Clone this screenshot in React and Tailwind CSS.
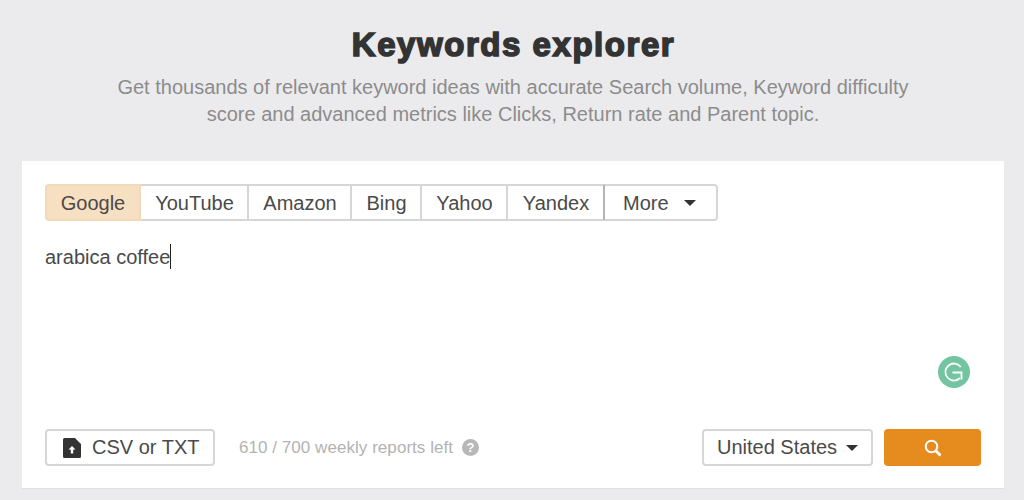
const engines = [
  { name: "Google", width: "w-[96px]", active: true },
  { name: "YouTube", width: "w-[108px]" },
  { name: "Amazon", width: "w-[103px]" },
  { name: "Bing", width: "w-[70px]" },
  { name: "Yahoo", width: "w-[86px]" },
  { name: "Yandex", width: "w-[97px]", dark: true },
];

function Caret() {
  return <span className="block w-0 h-0 border-l-[6px] border-r-[6px] border-t-[6px] border-l-transparent border-r-transparent border-t-[#333]" />;
}

export default function App() {
  return (
    <div className="w-[1024px] h-[500px] overflow-hidden bg-[#ebebed] font-['Liberation_Sans',Arial,sans-serif] flex flex-col items-center">
      <h1 className="mt-[24px] ml-[3px] h-[42px] text-[33px] leading-[42px] font-bold text-[#333] [-webkit-text-stroke:1.6px_#333] tracking-[1.55px]">
        Keywords explorer
      </h1>
      <p className="mt-[8px] ml-[2px] h-[58px] text-center text-[20px] leading-[27px] text-[#8c8c8c]">
        Get thousands of relevant keyword ideas with accurate Search volume, Keyword difficulty
        <br />
        score and advanced metrics like Clicks, Return rate and Parent topic.
      </p>

      <div className="mt-[29px] ml-[2px] w-[982px] h-[328px] bg-white border-b border-[#e0e0e0] px-[23px] pt-[23px] pb-[22px] flex flex-col">
        <div className="flex h-[37px] w-[673px] text-[20px] text-[#4a4a4a]">
          {engines.map((e) => (
            <div
              key={e.name}
              className={
                e.active
                  ? `${e.width} flex items-center justify-center bg-[#f7e0c1] border-2 border-[#f2d9b8] rounded-l-[4px]`
                  : `${e.width} flex items-center justify-center pl-[1px] border-y-2 border-r-2 border-[#d6d6d6] ${e.dark ? "border-r-[#b5b5b5]" : ""}`
              }
            >
              {e.name}
            </div>
          ))}
          <div className="w-[113px] flex items-center gap-[15px] pl-[18px] border-y-2 border-r-2 border-[#d6d6d6] rounded-r-[4px]">
            More
            <Caret />
          </div>
        </div>

        <div className="mt-[21px] h-[29px] flex items-center text-[20px] text-[#4a4a4a]">
          arabica coffee
          <span className="block w-px h-[25px] bg-[#222]" />
        </div>

        <div className="flex justify-end mt-[85px] pr-[11px]">
          <div className="w-8 h-8 rounded-full bg-[#72c5a0] flex items-center justify-center">
            <svg width="22" height="22" viewBox="0 0 22 22" fill="none" stroke="white" strokeWidth="1.8">
              <path d="M17.8 6A8.5 8.5 0 1 0 17 17" />
              <path d="M9.5 11.5H18.5V18.5" />
            </svg>
          </div>
        </div>

        <div className="mt-auto flex items-center h-[37px]">
          <button className="w-[170px] h-[37px] flex items-center gap-[11px] pl-[16px] pb-[2px] border-2 border-[#d6d6d6] rounded-[4px] text-[20px] text-[#4a4a4a]">
            <svg className="mt-[2px]" width="18" height="20" viewBox="0 0 18 20">
              <path d="M0 1.5A1.5 1.5 0 0 1 1.5 0H12L18 6V18.5A1.5 1.5 0 0 1 16.5 20H1.5A1.5 1.5 0 0 1 0 18.5Z" fill="#333" />
              <path d="M9 8L12.5 11.5H10.2V15.5H7.8V11.5H5.5Z" fill="white" />
            </svg>
            CSV or TXT
          </button>
          <span className="ml-[24px] text-[17px] tracking-[0.05px] text-[#b3b3b3]">610 / 700 weekly reports left</span>
          <span className="ml-[9px] w-[17px] h-[17px] rounded-full bg-[#b8b8b8] text-white text-[13px] font-bold leading-[17px] text-center">?</span>

          <button className="ml-auto w-[171px] h-[37px] flex items-center gap-[9px] pl-[13px] pb-[2px] border-2 border-[#d6d6d6] rounded-[4px] text-[20px] text-[#4a4a4a]">
            United States
            <span className="mt-[2px]"><Caret /></span>
          </button>
          <button className="ml-[11px] w-[97px] h-[37px] flex items-center justify-center bg-[#e68c1e] rounded-[4px]">
            <svg width="18" height="18" viewBox="0 0 18 18" fill="none" stroke="white" strokeWidth="2">
              <circle cx="7.5" cy="7.5" r="5.8" />
              <path d="M11.5 11.5L16.5 16.5" strokeWidth="2.8" />
            </svg>
          </button>
        </div>
      </div>
    </div>
  );
}
